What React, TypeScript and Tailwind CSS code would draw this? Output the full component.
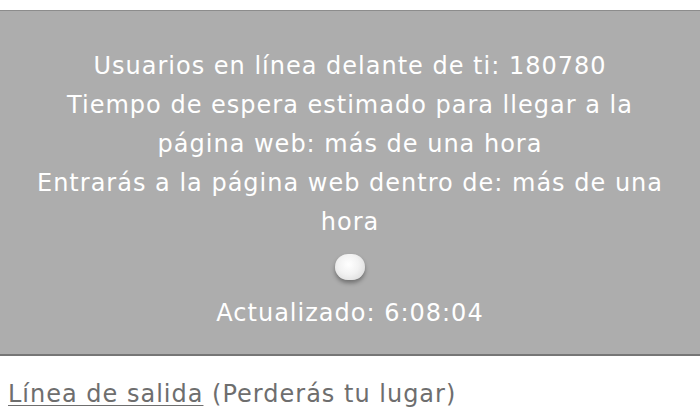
export default function App() {
  return (
    <div className="min-h-[420px] w-[700px] bg-white" style={{ fontFamily: '"DejaVu Sans", "Noto Sans", sans-serif' }}>
      <div className="h-[10px]" />
      <section className="flex h-[346px] flex-col items-center border-t border-b-2 border-t-[#8c8c8c] border-b-[#767676] bg-[#adadad] px-[30px] pt-[36px] text-center text-[24px] leading-[39px] tracking-[1px] text-white">
        <p>Usuarios en línea delante de ti: 180780</p>
        <p>Tiempo de espera estimado para llegar a la página web: más de una hora</p>
        <p>Entrarás a la página web dentro de: más de una hora</p>
        <div className="mt-[12px] h-[26px] w-[30px] rounded-full bg-[radial-gradient(circle_at_45%_40%,#ffffff_0%,#f2f2f2_45%,#d4d4d4_100%)] shadow-[0_3px_4px_rgba(0,0,0,0.35)]" />
        <p className="mt-[14px]">Actualizado: 6:08:04</p>
      </section>
      <p className="px-[8px] pt-[20px] text-[24px] tracking-[1px] text-[#6e6e6e]">
        <a className="underline decoration-1 underline-offset-[3px]" href="#">Línea de salida</a> (Perderás tu lugar)
      </p>
    </div>
  )
}
